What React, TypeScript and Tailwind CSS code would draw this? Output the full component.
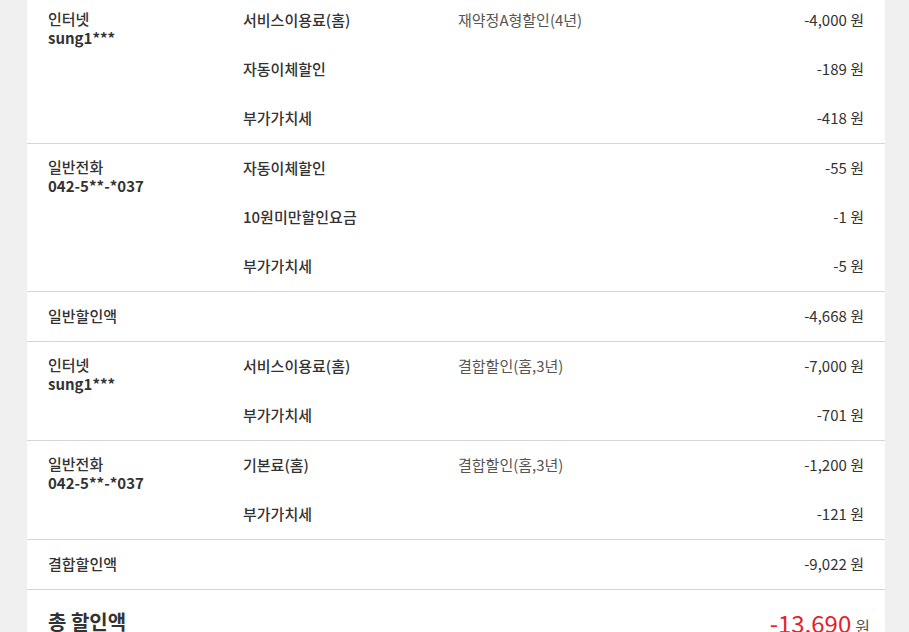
import React from "react";

type Line = { item: string; note?: string; amount: string };
type Group = { title: string; sub?: string; lines: Line[] };

const groups: (Group | { total: string; amount: string })[] = [
  {
    title: "인터넷",
    sub: "sung1***",
    lines: [
      { item: "서비스이용료(홈)", note: "재약정A형할인(4년)", amount: "-4,000" },
      { item: "자동이체할인", amount: "-189" },
      { item: "부가가치세", amount: "-418" },
    ],
  },
  {
    title: "일반전화",
    sub: "042-5**-*037",
    lines: [
      { item: "자동이체할인", amount: "-55" },
      { item: "10원미만할인요금", amount: "-1" },
      { item: "부가가치세", amount: "-5" },
    ],
  },
  { total: "일반할인액", amount: "-4,668" },
  {
    title: "인터넷",
    sub: "sung1***",
    lines: [
      { item: "서비스이용료(홈)", note: "결합할인(홈,3년)", amount: "-7,000" },
      { item: "부가가치세", amount: "-701" },
    ],
  },
  {
    title: "일반전화",
    sub: "042-5**-*037",
    lines: [
      { item: "기본료(홈)", note: "결합할인(홈,3년)", amount: "-1,200" },
      { item: "부가가치세", amount: "-121" },
    ],
  },
  { total: "결합할인액", amount: "-9,022" },
];

const Amount = ({ value }: { value: string }) => (
  <span className="text-[#333]">
    {value} <span>원</span>
  </span>
);

export default function App() {
  return (
    <div
      className="h-[632px] overflow-hidden bg-[#f0f0f0] pl-[27px] pr-[24px] text-[15px] leading-[19px] text-[#333]"
      style={{ fontFamily: '"Noto Sans CJK KR", "Noto Sans", sans-serif' }}
    >
      <div className="-mt-[4px] bg-white">
        {groups.map((g, i) =>
          "total" in g ? (
            <div key={i} className="flex h-[50px] items-center border-b border-[#d6d6d6] px-[21px] pb-[3px]">
              <div className="flex-1 font-medium">{g.total}</div>
              <Amount value={g.amount} />
            </div>
          ) : (
            <div key={i} className="flex border-b border-[#d6d6d6] px-[21px]">
              <div className="w-[195px] shrink-0 pt-[13px]">
                <div className="font-medium">{g.title}</div>
                <div className="font-bold">{g.sub}</div>
              </div>
              <div className="flex flex-1 flex-col">
                {g.lines.map((l, j) => (
                  <div key={j} className="flex h-[49px] items-center pb-[3px]">
                    <div className="w-[215px] shrink-0 font-medium">{l.item}</div>
                    <div className="flex-1 text-[#555]">{l.note}</div>
                    <Amount value={l.amount} />
                  </div>
                ))}
              </div>
            </div>
          )
        )}
        <div className="flex items-start pl-[21px] pr-[15px] pt-[19px] pb-4">
          <div className="flex-1 text-[20px] font-bold leading-[26px] text-[#333]">총 할인액</div>
          <div className="flex items-baseline">
            <span className="text-[24px] leading-[28px] text-[#e5202a]">-13,690</span>
            <span className="ml-[4px] text-[16px] text-[#555]">원</span>
          </div>
        </div>
      </div>
    </div>
  );
}
